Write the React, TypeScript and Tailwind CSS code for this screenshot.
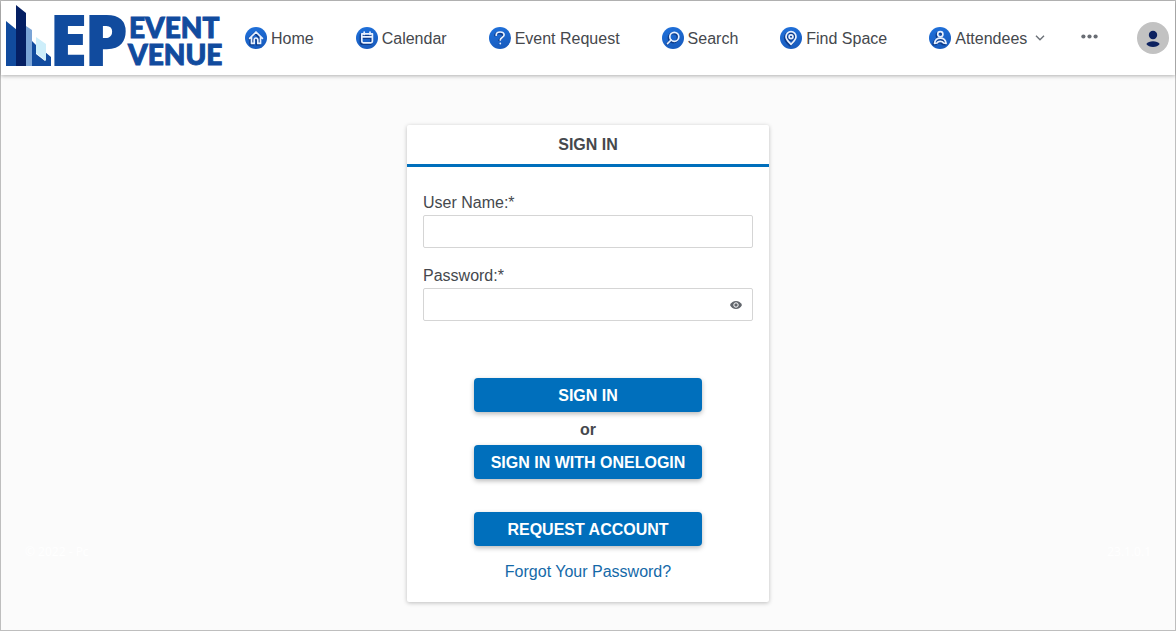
import { useState } from 'react';
import type { ReactNode } from 'react';

function Logo() {
  return (
    <svg viewBox="0 0 226 72" className="h-[72px] w-[226px] shrink-0 overflow-visible" role="img" aria-label="EP Event Venue">
      <polygon points="5,19 16,28 16,64 5,64" fill="#114b9e" />
      <polygon points="15,3 25,11 25,64 15,64" fill="#051f63" />
      <polygon points="25,24 31,28 31,64 25,64" fill="#7ba4d6" />
      <polygon points="31,39 35,43 35,52 44,59 44,50 50,55 50,64 31,64" fill="#114b9e" />
      <polygon points="35,35 45,42 45,59 35,51" fill="#cdeefa" />
      <g fill="#114b9e">
        <g fontFamily="'Open Sans', 'Liberation Sans', sans-serif" fontWeight="800" fontSize="70">
          <text x="48" y="64">E</text>
          <text x="83" y="64">P</text>
        </g>
        <g fontFamily="Lato, 'Liberation Sans', sans-serif" fontWeight="900" fontSize="28" stroke="#114b9e" strokeWidth="1">
          <text x="128" y="36">EVENT</text>
          <text x="127" y="63">VENUE</text>
        </g>
      </g>
    </svg>
  );
}

function Badge({ children }: { children: ReactNode }) {
  return (
    <svg viewBox="0 0 22 22" className="size-[22px] shrink-0" fill="none" aria-hidden="true">
      <defs>
        <linearGradient id="badge" x1="0.3" y1="0" x2="0.6" y2="1">
          <stop offset="0" stopColor="#1f70da" />
          <stop offset="1" stopColor="#185bbd" />
        </linearGradient>
      </defs>
      <circle cx="11" cy="11" r="11" fill="url(#badge)" />
      <g stroke="#082f78" strokeWidth="2.4" strokeLinejoin="round" opacity="0.75" transform="translate(-1 1)">
        {children}
      </g>
      <g stroke="#e8f1ff" strokeWidth="1.7" strokeLinecap="round" strokeLinejoin="round">
        {children}
      </g>
    </svg>
  );
}

const links = [
  { label: 'Home', icon: <path d="M4.600 11.400 11 5l6.400 6.400M6.500 10v6.400h2.700v-3.600a1.800 1.800 0 0 1 3.600 0v3.600h2.700V10" /> },
  {
    label: 'Calendar',
    icon: <path d="M5.8 6.8h10.6v7.4a1.6 1.6 0 0 1-1.6 1.6H7.4a1.6 1.6 0 0 1-1.6-1.6zM5.8 9.8h10.6M8.2 5v2.5M14 5v2.5" />,
  },
  {
    label: 'Event Request',
    icon: <path d="M7.2 8.2C7.2 6.2 8.800 5 11.1 5s4 1.300 4 3.100c0 2.400-3.800 2.500-3.800 4.900M11.3 16.3v.3" />,
  },
  {
    label: 'Search',
    icon: (
      <>
        <circle cx="12.3" cy="9.8" r="4.5" />
        <path d="m9.1 13-3.6 3.600" />
      </>
    ),
  },
  {
    label: 'Find Space',
    icon: (
      <>
        <path d="M11 17.3C8.5 14.7 6 12.5 6 9.700a5 5 0 0 1 10 0c0 2.800-2.500 5-5 7.600z" />
        <circle cx="11" cy="9.8" r="1.9" />
      </>
    ),
  },
  {
    label: 'Attendees',
    icon: (
      <>
        <circle cx="11.3" cy="7.2" r="2.600" />
        <path d="M5.500 16.300c.6-3.400 2.700-5.100 5.800-5.100s5.200 1.700 5.800 5.100L14.600 16c-.6-1-1.800-1.600-3.300-1.600S8.600 15 8 16z" />
      </>
    ),
  },
];

const buttonClass =
  'h-[34px] w-[228px] rounded bg-[#006fbc] pt-0.5 font-bold whitespace-nowrap text-white shadow-[0_2px_5px_rgba(0,0,0,0.28)] hover:bg-[#0063a8]';
const inputClass = 'h-[33px] w-full rounded-xs border border-[#d5d5d5] bg-white px-2 outline-none focus:border-[#006fbc]';
const noteClass = "self-end px-6 pb-[42px] font-['Open_Sans',sans-serif] text-xs text-white";

export default function App() {
  const [visible, setVisible] = useState(false);

  return (
    <div className="flex min-h-screen flex-col border border-[#bebebe] bg-[#fbfbfb] font-['Liberation_Sans',Arial,sans-serif] text-base text-[#45484d]">
      <header className="flex h-[74px] items-center bg-white pr-1.5 shadow-[0_1px_4px_rgba(0,0,0,0.3)]">
        <a href="#home" aria-label="EP Event Venue">
          <Logo />
        </a>
        <nav className="ml-[18px] flex items-center gap-[42px]">
          {links.map(({ label, icon }) => (
            <a key={label} href="#" className="flex items-center gap-1 whitespace-nowrap">
              <Badge>{icon}</Badge>
              <span className="pt-0.5">{label}</span>
              {label === 'Attendees' && (
                <svg viewBox="0 0 10 6" className="ml-1 h-1.5 w-2.5" fill="none" stroke="#6b7077" strokeWidth="1.4" aria-hidden="true">
                  <path d="m1 .8 4 4 4-4" />
                </svg>
              )}
            </a>
          ))}
        </nav>
        <button type="button" aria-label="More" className="mb-1 ml-9">
          <svg viewBox="0 0 17 5" className="h-[5px] w-[17px]" fill="#696d74">
            <circle cx="2.4" cy="2.5" r="2.1" />
            <circle cx="8.5" cy="2.5" r="2.1" />
            <circle cx="14.6" cy="2.5" r="2.1" />
          </svg>
        </button>
        <button type="button" aria-label="Account" className="ml-auto">
          <svg viewBox="0 0 32 32" className="size-8" fill="#0d2260">
            <circle cx="16" cy="16" r="16" fill="#c2c2c2" />
            <circle cx="16" cy="13" r="4.2" />
            <path d="M9.3 22c1.3-1.8 3.8-2.7 6.7-2.7s5.400.9 6.700 2.700c-1.300 1.900-3.800 2.900-6.700 2.900S10.600 23.900 9.300 22z" />
          </svg>
        </button>
      </header>

      <div className="grid grid-cols-[1fr_362px_1fr] pt-[50px]">
        <small className={noteClass}>© 2022 - Pc</small>
        <main className="rounded-xs bg-white shadow-[0_1px_4px_rgba(0,0,0,0.25)]">
          <h1 className="border-b-3 border-[#006fbc] text-center leading-[39px] font-bold">SIGN IN</h1>
          <form className="flex flex-col items-center px-4 pt-[23px] pb-[18px]" onSubmit={(e) => e.preventDefault()}>
            <label htmlFor="user" className="w-full leading-[25px]">
              User Name:*
            </label>
            <input id="user" type="text" className={inputClass} />
            <label htmlFor="password" className="mt-[15px] w-full leading-[25px]">
              Password:*
            </label>
            <div className="relative w-full">
              <input id="password" type={visible ? 'text' : 'password'} className={inputClass} />
              <button
                type="button"
                aria-label="Show password"
                onClick={() => setVisible(!visible)}
                className="absolute inset-y-0 right-2.5 flex items-center"
              >
                <svg viewBox="0 0 14 10" className="h-2.5 w-3.5" aria-hidden="true">
                  <path d="M1 5c1.200-2.600 3.400-4.100 6-4.100S11.800 2.400 13 5c-1.200 2.600-3.400 4.100-6 4.100S2.200 7.600 1 5z" fill="#62666c" />
                  <circle cx="7" cy="5" r="2.200" fill="none" stroke="#fff" strokeWidth="1" />
                </svg>
              </button>
            </div>
            <button type="submit" className={`mt-[57px] ${buttonClass}`}>
              SIGN IN
            </button>
            <span className="pt-0.5 leading-[31px] font-bold">or</span>
            <button type="button" className={buttonClass}>
              SIGN IN WITH ONELOGIN
            </button>
            <button type="button" className={`mt-[33px] ${buttonClass}`}>
              REQUEST ACCOUNT
            </button>
            <a href="#forgot" className="mt-3.5 leading-6 text-[#1469a8]">
              Forgot Your Password?
            </a>
          </form>
        </main>
        <small className={`text-right ${noteClass}`}>23.1.0.1</small>
      </div>
    </div>
  );
}
